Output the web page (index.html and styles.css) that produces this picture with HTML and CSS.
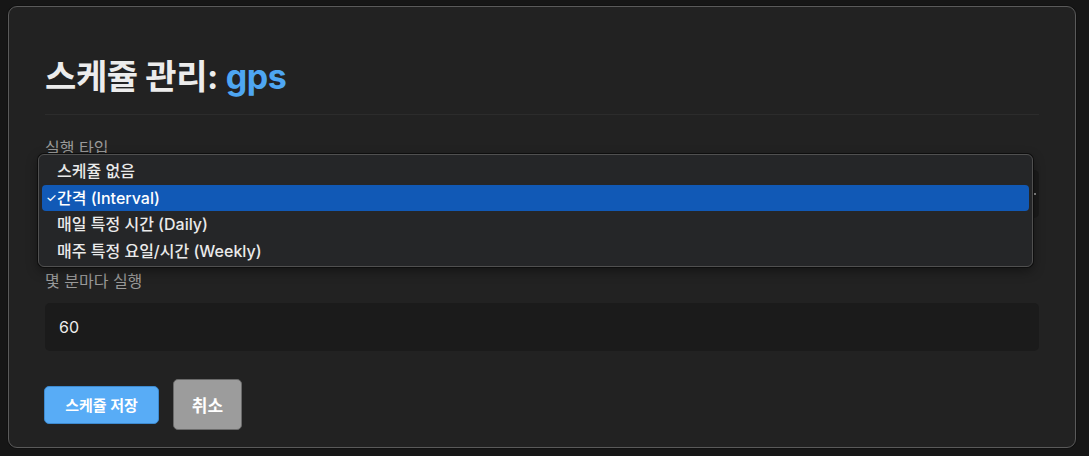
FILE: index.html
```html
<!DOCTYPE html>
<html lang="ko">
<head>
<meta charset="utf-8">
<title>스케쥴 관리</title>
<link rel="stylesheet" href="styles.css">
</head>
<body>
<div class="modal">
  <h1 class="title">스케쥴 관리: <span class="accent">gps</span></h1>
  <div class="divider"></div>
  <div class="field">
    <label class="label">실행 타입</label>
    <div class="select-wrap">
      <div class="select"><span class="select-dot"></span></div>
      <div class="menu">
        <div class="option">스케쥴 없음</div>
        <div class="option selected"><span class="check">✓</span>간격 (Interval)</div>
        <div class="option">매일 특정 시간 (Daily)</div>
        <div class="option">매주 특정 요일/시간 (Weekly)</div>
      </div>
    </div>
  </div>
  <div class="field field-2">
    <label class="label">몇 분마다 실행</label>
    <div class="input">60</div>
  </div>
  <div class="actions">
    <button class="btn btn-primary">스케쥴 저장</button>
    <button class="btn btn-cancel">취소</button>
  </div>
</div>
</body>
</html>
```

FILE: styles.css
```css
* { box-sizing: border-box; }
html, body { margin: 0; height: 100%; }
body {
  background: #161616;
  padding: 6px 0 0 8px;
  font-family: Inter, "Noto Sans CJK KR", sans-serif;
  color: #e8e8e8;
}
.modal {
  width: 1068px;
  height: 442px;
  background: #222222;
  border: 1px solid #5a5a5a;
  border-radius: 9px;
  padding: 0 36px;
  box-shadow: 0 0 0 1px #111;
}
.title {
  margin: 0;
  padding-top: 50px;
  font-size: 34px;
  line-height: 40px;
  font-weight: 700;
  color: #ececec;
  letter-spacing: -0.4px;
}
.accent { color: #4ea6f2; }
.divider {
  height: 1px;
  background: #2c2c2c;
  margin-top: 17px;
}
.field { margin-top: 23px; }
.label {
  display: block;
  font-size: 16px;
  line-height: 20px;
  color: #9a9a9a;
}
.select-wrap {
  position: relative;
  margin-top: 12px;
}
.select {
  height: 48px;
  background: #1b1b1b;
  border-radius: 5px;
  position: relative;
}
.select-dot {
  position: absolute;
  right: 3px;
  top: 23px;
  width: 2px;
  height: 2px;
  background: #888;
}
.menu {
  position: absolute;
  left: -7px;
  top: -16px;
  width: 995px;
  height: 113px;
  background: #252628;
  border: 1px solid #505050;
  border-radius: 6px;
  padding: 3px 3px;
  box-shadow: 0 0 0 1px #0e0e0e, 0 4px 12px rgba(0,0,0,0.4);
}
.option {
  height: 26.5px;
  line-height: 26.5px;
  padding-left: 15px;
  font-size: 16px;
  font-weight: 500;
  color: #eaeaea;
  position: relative;
  border-radius: 4px;
}
.option.selected {
  background: #1159b6;
  color: #fff;
}
.check {
  position: absolute;
  left: 4px;
  font-size: 12px;
}
.field-2 { margin-top: 53px; }
.input {
  margin-top: 12px;
  height: 48px;
  background: #1b1b1b;
  border-radius: 5px;
  padding-left: 14px;
  line-height: 48px;
  font-size: 16px;
  color: #ececec;
}
.actions {
  display: flex;
  align-items: center;
  gap: 14px;
  margin-top: 28px;
}
.btn {
  font-family: Inter, "Noto Sans CJK KR", sans-serif;
  font-weight: 700;
  color: #fff;
  border-radius: 5px;
  cursor: pointer;
}
.btn-primary {
  width: 115px;
  height: 38px;
  background: #58acf6;
  border: 1px solid #3d8ad0;
  font-size: 15px;
  margin-left: -1px;
}
.btn-cancel {
  width: 69px;
  height: 51px;
  background: #9c9c9c;
  border: 1px solid #6a6a6a;
  font-size: 17px;
}
```
